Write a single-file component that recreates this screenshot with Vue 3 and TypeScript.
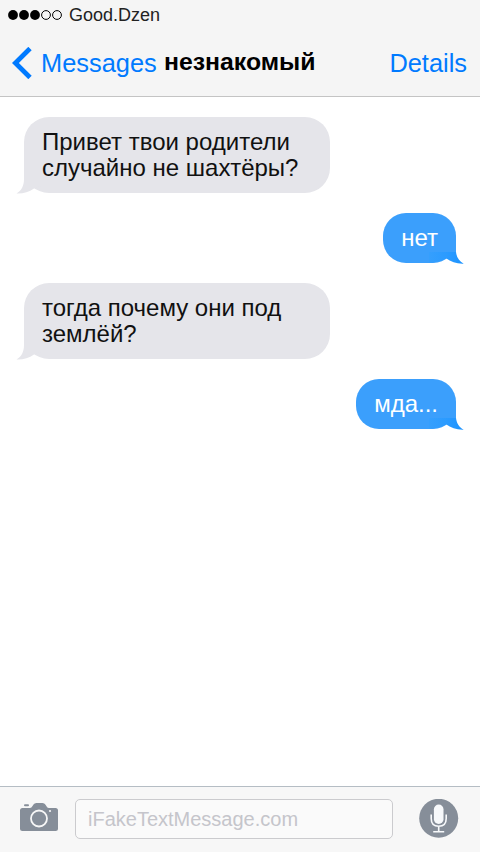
<script setup lang="ts">
interface Message {
  id: number
  from: 'them' | 'me'
  lines: string[]
}

const signal: boolean[] = [true, true, true, false, false]

const messages: Message[] = [
  { id: 1, from: 'them', lines: ['Привет твои родители', 'случайно не шахтёры?'] },
  { id: 2, from: 'me', lines: ['нет'] },
  { id: 3, from: 'them', lines: ['тогда почему они под', 'землёй?'] },
  { id: 4, from: 'me', lines: ['мда...'] },
]
</script>

<template>
  <div class="phone">
    <header class="header">
      <div class="status">
        <svg class="signal" width="54" height="10" viewBox="0 0 54 10">
          <circle
            v-for="(on, i) in signal"
            :key="i"
            :cx="5 + i * 11"
            cy="5"
            :r="on ? 4.9 : 4.4"
            :fill="on ? '#000' : 'none'"
            :stroke="on ? 'none' : '#000'"
            stroke-width="1"
          />
        </svg>
        <span class="carrier">Good.Dzen</span>
      </div>
      <nav class="nav">
        <svg class="chevron" width="20" height="32" viewBox="0 0 20 32">
          <path d="M18 1.5 3.4 16 18 30.5" fill="none" stroke="#007aff" stroke-width="4.8" />
        </svg>
        <span class="back">Messages</span>
        <h1 class="title">незнакомый</h1>
        <span class="details">Details</span>
      </nav>
    </header>

    <main class="chat">
      <div v-for="m in messages" :key="m.id" class="bubble" :class="m.from">
        <div v-for="line in m.lines" :key="line" class="line">{{ line }}</div>
        <svg v-if="m.from === 'them'" class="tail" width="30" height="30" viewBox="0 0 30 30">
          <path d="M8 0V15C8 22 5.500 26.500 0.500 29.500C7 29.800 13 28 18 24.500L30 20V0Z" fill="#e5e5ea" />
        </svg>
        <svg v-else class="tail" width="36" height="30" viewBox="0 0 36 30">
          <defs>
            <linearGradient :id="`tail-${m.id}`" x1="0" x2="1" y1="0" y2="0">
              <stop offset="0" stop-color="#359ffd" />
              <stop offset="0.5" stop-color="#2b9bff" />
              <stop offset="1" stop-color="#1c93ff" />
            </linearGradient>
          </defs>
          <path d="M12 4H28V19H12Z" fill="#3b9ffc" />
          <path
            d="M1 18H28C28.500 23 31 27 35.700 29.700C29 30 23 28 18 24.300C14 27 9 28.500 1 28.500Z"
            :fill="`url(#tail-${m.id})`"
          />
        </svg>
      </div>
    </main>

    <footer class="composer">
      <svg class="camera" width="38" height="30" viewBox="0 0 38 30">
        <path
          d="M2.500 6H10Q11.500 6 12.500 4L13.500 2.500Q14.300 1 16.500 1H22.500Q24.500 1 25.300 2.500L27 5Q27.500 6 29 6H35.500Q38 6 38 8.500V26.500Q38 29 35.500 29H2.500Q0 29 0 26.500V8.500Q0 6 2.500 6Z"
          fill="#868e99"
        />
        <rect x="4" y="2.300" width="5" height="2" rx="1" fill="#868e99" />
        <circle cx="19" cy="16.500" r="8" fill="none" stroke="#f7f7f7" stroke-width="1.800" />
        <circle cx="30" cy="9" r="1.100" fill="#f7f7f7" />
      </svg>
      <div class="field">iFakeTextMessage.com</div>
      <svg class="mic" width="40" height="40" viewBox="0 0 40 40">
        <circle cx="19.700" cy="19.300" r="19.500" fill="#868e99" />
        <rect x="14.900" y="5.500" width="9.600" height="19.500" rx="4.800" fill="#f7f9fb" />
        <path
          d="M12.200 15.500V19.500Q12.200 27.300 19.700 27.300T27.200 19.500V15.500M19.700 27.300V32.500M14.200 32.700H25.200"
          fill="none"
          stroke="#f7f9fb"
          stroke-width="1.600"
        />
      </svg>
    </footer>
  </div>
</template>

<style>
body {
  margin: 0;
}
</style>

<style scoped>
.phone {
  display: flex;
  flex-direction: column;
  width: 480px;
  height: 852px;
  overflow: hidden;
  background: #fff;
  font-family: "Liberation Sans", Arial, sans-serif;
}
.header {
  box-sizing: border-box;
  flex: none;
  height: 97px;
  background: #f5f5f5;
  border-bottom: 1px solid #c4c4c4;
}
.status {
  display: flex;
  align-items: center;
  height: 30px;
  padding-left: 8px;
}
.carrier {
  margin-left: 7px;
  font-size: 18px;
  line-height: 30px;
  color: #222;
}
.nav {
  display: flex;
  align-items: center;
  height: 66px;
  padding: 0 13px 0 12px;
  white-space: nowrap;
}
.back,
.details {
  font-size: 25.4px;
  color: #007aff;
}
.back {
  width: 115px;
  margin-left: 9px;
}
.title {
  margin: 0 0 2px 8px;
  font-size: 24.8px;
  font-weight: 700;
  color: #000;
}
.details {
  margin-left: auto;
}
.chat {
  flex: 1;
  display: flex;
  flex-direction: column;
  align-items: flex-start;
  gap: 20px;
  padding: 20px 24px 0;
}
.bubble {
  position: relative;
  padding: 12px 18px;
  font-size: 24px;
  line-height: 26px;
  white-space: nowrap;
}
.them {
  box-sizing: border-box;
  width: 306px;
  border-radius: 25px;
  background: #e5e5ea;
  color: #111;
}
.me {
  align-self: flex-end;
  border-radius: 23px;
  background: #3b9ffc;
  color: #fff;
}
.tail {
  position: absolute;
}
.them .tail {
  left: -8px;
  bottom: -1px;
}
.me .tail {
  right: -8px;
  bottom: -1px;
}
.line {
  position: relative;
  z-index: 1;
}
.composer {
  box-sizing: border-box;
  flex: none;
  display: flex;
  align-items: center;
  height: 66px;
  padding: 0 21px 2px 20px;
  background: #f7f7f7;
  border-top: 1px solid #b5bdc4;
}
.camera {
  margin-bottom: 3px;
}
.field {
  box-sizing: border-box;
  width: 318px;
  height: 40px;
  margin-left: 17px;
  padding-left: 12px;
  border: 1px solid #cbcbce;
  border-radius: 5px;
  background: #fafafa;
  font-size: 20px;
  line-height: 38px;
  color: #c5c5cb;
}
.mic {
  margin-left: auto;
}
</style>
